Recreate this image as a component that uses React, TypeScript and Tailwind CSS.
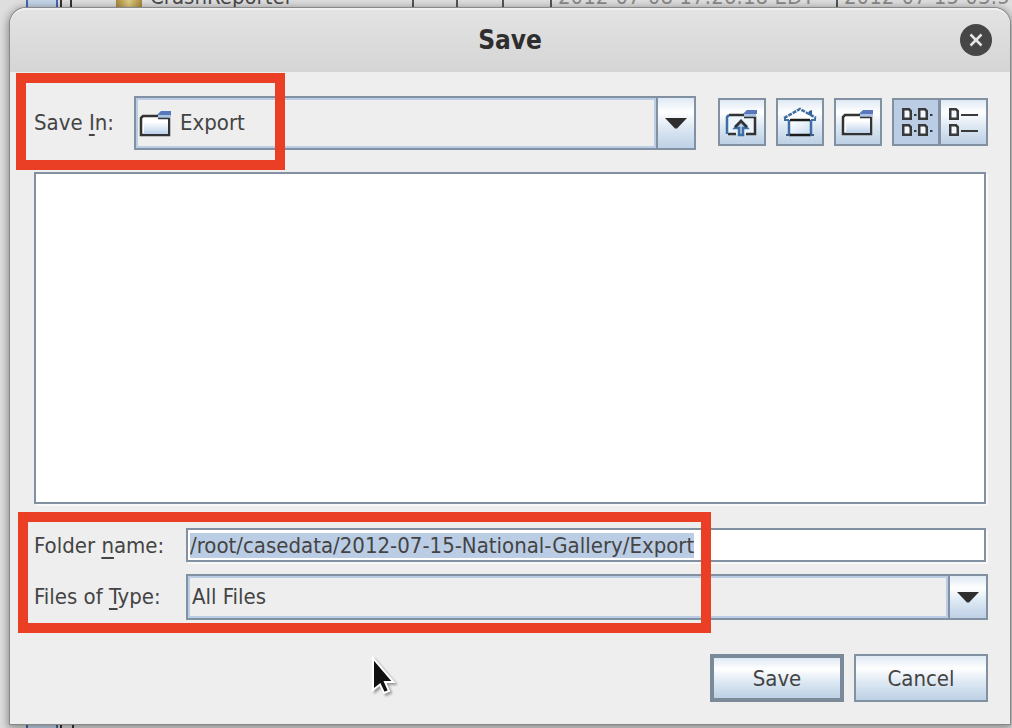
import { useEffect, useRef, type ReactNode } from "react";

const BUTTON_FACE =
  "bg-[linear-gradient(to_bottom,#dfe9f4_0%,#ffffff_28%,#dde8f3_60%,#bdd0e5_100%)]";

function ArrowCell() {
  return (
    <span
      aria-hidden="true"
      className={`pointer-events-none flex w-[38px] shrink-0 items-center justify-center self-stretch border-l-2 border-[#8191a1] ${BUTTON_FACE}`}
    >
      <svg width="22" height="12" viewBox="0 0 22 12">
        <path d="M0 1H22L12 11.500H10Z" fill="#2e2e2e" />
      </svg>
    </span>
  );
}

function Combo({ id, value, icon, size }: { id: string; value: string; icon?: ReactNode; size: string }) {
  return (
    <div className={`flex flex-1 items-center border-2 border-[#8191a1] ${size}`}>
      <div className="flex h-full flex-1 items-center border-2 border-[#bbcde4] bg-[#eeeeee]">
        {icon}
        <select
          id={id}
          className="h-full flex-1 cursor-default appearance-none bg-transparent pb-0.5 pl-0.5 outline-none"
          defaultValue={value}
        >
          <option>{value}</option>
        </select>
      </div>
      <ArrowCell />
    </div>
  );
}

function FolderShape() {
  return (
    <>
      <defs>
        <linearGradient id="folderFill" x1="0" y1="0" x2="0" y2="1">
          <stop offset="0.2" stopColor="#ffffff" />
          <stop offset="1" stopColor="#bcd1ea" />
        </linearGradient>
      </defs>
      <path d="M7 17L9 15H35V34H7Z" fill="#ffffff" stroke="#333" strokeWidth="2.500" />
      <path d="M10 18H34V33H10Z" fill="url(#folderFill)" />
      <path d="M24 17V13L27 10H36V17Z" fill="#a9c2e2" />
      <path d="M23 14L27 10H37V14Z" fill="#5977bd" />
      <path d="M24 17.500H35" stroke="#333" strokeWidth="1.500" />
    </>
  );
}

function FolderIcon() {
  return (
    <svg width="44" height="44" viewBox="0 0 44 44" aria-hidden="true">
      <FolderShape />
    </svg>
  );
}

function ComboFolderIcon() {
  return (
    <svg width="40" height="44" viewBox="4 0 40 44" aria-hidden="true" className="shrink-0">
      <FolderShape />
    </svg>
  );
}

function UpFolderIcon() {
  return (
    <svg width="44" height="44" viewBox="0 0 44 44" aria-hidden="true">
      <path d="M7 17L9 15H35V34H7Z" fill="#edf4fb" />
      <path d="M9 15H25M35 16V34H26M16 34H8" fill="none" stroke="#333" strokeWidth="2.500" />
      <path d="M9 15L7 17V34" fill="none" stroke="#3f6ea5" strokeWidth="2.500" />
      <path d="M24 17V13L27 10H36V17Z" fill="#a9c2e2" />
      <path d="M23 14L27 10H37V14Z" fill="#5977bd" />
      <path d="M24 17.500H35" stroke="#333" strokeWidth="1.500" />
      <path d="M19 35V28H15L21 21L27 28H23V35Z" fill="#b8d0ec" stroke="#3f6ea5" strokeWidth="2.500" />
      <path d="M15 27L21 21L27 27" fill="none" stroke="#333" strokeWidth="2.500" />
    </svg>
  );
}

function HomeIcon() {
  return (
    <svg width="44" height="44" viewBox="0 0 44 44" aria-hidden="true">
      <defs>
        <linearGradient id="wallFill" x1="0" y1="0" x2="1" y2="1">
          <stop offset="0.1" stopColor="#ffffff" />
          <stop offset="1" stopColor="#c8dbf0" />
        </linearGradient>
      </defs>
      <path d="M6 19L22 8L38 19Z" fill="#ffffff" />
      <path d="M11 20H33V34H11Z" fill="url(#wallFill)" />
      <path d="M30 14L31 11L34 10V17Z" fill="#2f5f9c" />
      <path d="M6 18L22 9L38 18" fill="none" stroke="#3f6ea5" strokeWidth="2.500" strokeDasharray="4 1" />
      <path d="M7 18V20H11M37 18V20H33" fill="none" stroke="#3f6ea5" strokeWidth="2" />
      <path d="M11 20V34M33 20V34" stroke="#3f6ea5" strokeWidth="2.500" />
      <path d="M12 20H32M11 35H33" stroke="#1c1c1c" strokeWidth="2.500" />
      <path d="M8 35H12M32 35H36" stroke="#3f5f88" strokeWidth="2" />
    </svg>
  );
}

function Tile({ x, y }: { x: number; y: number }) {
  return (
    <path
      transform={`translate(${x} ${y})`}
      d="M1.250 1.250H7L8.750 3V10.750H1.250Z"
      fill="#f2f8ff"
      stroke="#3a3a3a"
      strokeWidth="2.500"
    />
  );
}

function GridIcon() {
  return (
    <svg width="44" height="44" viewBox="0 0 44 44" aria-hidden="true">
      <Tile x={8} y={8} />
      <Tile x={24} y={8} />
      <Tile x={8} y={24} />
      <Tile x={24} y={24} />
      <path d="M20 15H22.500M36 15H38.500M20 31H22.500M36 31H38.500" stroke="#3a3a3a" strokeWidth="2" />
    </svg>
  );
}

function ListIcon() {
  return (
    <svg width="44" height="44" viewBox="0 0 44 44" aria-hidden="true">
      <Tile x={8} y={8} />
      <Tile x={8} y={24} />
      <path d="M20 15H37M20 31H37" stroke="#3a3a3a" strokeWidth="2" />
    </svg>
  );
}

function ToolButton({ label, children }: { label: string; children: ReactNode }) {
  return (
    <button type="button" aria-label={label} className={`size-12 shrink-0 border-2 border-[#8191a1] ${BUTTON_FACE}`}>
      {children}
    </button>
  );
}

function BackgroundRow() {
  return (
    <div className="flex h-2 items-end overflow-hidden whitespace-nowrap pl-[26px] leading-none text-[#8a8a8a]">
      <span className="h-2 w-8 shrink-0 border-x-2 border-[#4468b0] bg-[#c5d5e8]" />
      <span className="ml-0.5 h-2 w-3 shrink-0 border-x-2 border-[#333]" />
      <span className="ml-11 h-2 w-[26px] shrink-0 bg-[linear-gradient(to_right,#a98a3c,#e0cc83,#a98a3c)]" />
      <span className="w-[272px] shrink-0 border-r-2 border-[#555] pl-2 text-[#4a4a4a]">CrashReporter</span>
      <span className="h-2 w-11 shrink-0 border-r-2 border-[#555]" />
      <span className="h-2 w-[46px] shrink-0 border-r-2 border-[#555]" />
      <span className="h-2 w-12 shrink-0 border-r-2 border-[#555]" />
      <span className="w-[286px] shrink-0 border-r-2 border-[#555] pl-1.5">2012-07-08 17:26:18 EDT</span>
      <span className="pl-1.5">2012-07-15 03:54</span>
    </div>
  );
}

export default function App() {
  const nameRef = useRef<HTMLInputElement>(null);

  useEffect(() => {
    nameRef.current?.focus();
    nameRef.current?.select();
  }, []);

  return (
    <div className="flex min-h-screen flex-col overflow-hidden bg-[#dedede] font-['DejaVu_Sans_Condensed','DejaVu_Sans',sans-serif] text-[22px] text-[#444444]">
      <BackgroundRow />
      <main className="relative mr-0.5 ml-2.5 flex flex-1 flex-col rounded-t-2xl bg-[#eeeeee] shadow-[0_0_0_1px_#888888,0_2px_9px_2px_rgba(0,0,0,0.4)]">
        <header className="relative flex h-16 items-center justify-center rounded-t-2xl border-t-2 border-[#f0f0f0] bg-linear-to-b from-[#e3e3e3] to-[#d5d5d5] pb-0.5">
          <h1 className="text-[26px] font-bold text-[#2e2e2e]">Save</h1>
          <button type="button" aria-label="Close" className="absolute right-[18px] size-8 rounded-full bg-[#464646]">
            <svg width="32" height="32" viewBox="0 0 32 32" aria-hidden="true">
              <path d="M10.500 10.500L21.500 21.500M21.500 10.500L10.500 21.500" stroke="#e6e6e6" strokeWidth="2.500" />
            </svg>
          </button>
        </header>

        <form className="flex flex-1 flex-col pt-6 pr-[22px] pb-[22px] pl-6" onSubmit={(e) => e.preventDefault()}>
          <div className="relative flex items-center">
            <label htmlFor="save-in" className="w-[100px] shrink-0 pb-0.5">
              Save <u className="decoration-2 underline-offset-4">I</u>n:
            </label>
            <Combo id="save-in" value="Export" icon={<ComboFolderIcon />} size="h-[54px]" />
            <div className="ml-[22px] flex gap-2.5 pb-0.5">
              <ToolButton label="Up One Level"><UpFolderIcon /></ToolButton>
              <ToolButton label="Home"><HomeIcon /></ToolButton>
              <ToolButton label="Create New Folder"><FolderIcon /></ToolButton>
              <div className="flex">
                <button type="button" aria-label="List" aria-pressed="true" className="size-12 border-2 border-[#8191a1] bg-[#bbcde4]">
                  <GridIcon />
                </button>
                <button type="button" aria-label="Details" aria-pressed="false" className={`h-12 w-12 border-2 border-l border-[#8191a1] ${BUTTON_FACE}`}>
                  <ListIcon />
                </button>
              </div>
            </div>
            <div aria-hidden="true" className="pointer-events-none absolute -top-[23px] -left-[18px] h-[97px] w-[269px] border-10 border-[#ea3e25]" />
          </div>

          <div role="listbox" aria-label="Files" className="mt-[22px] mr-0.5 min-h-40 flex-1 border-2 border-[#8191a1] bg-white shadow-[2px_2px_0_#f8f8f8]" />

          <div className="relative mt-6 flex flex-col gap-3">
            <div className="flex items-center">
              <label htmlFor="folder-name" className="w-[152px] shrink-0">
                Folder <u className="decoration-2 underline-offset-4">n</u>ame:
              </label>
              <input
                id="folder-name"
                ref={nameRef}
                type="text"
                defaultValue="/root/casedata/2012-07-15-National-Gallery/Export"
                className="mr-0.5 h-[34px] min-w-0 flex-1 border-2 border-[#8191a1] bg-white px-0.5 leading-7 shadow-[2px_2px_0_#f8f8f8] outline-none selection:bg-[#bbcde4] selection:text-[#444444]"
              />
            </div>
            <div className="flex items-center">
              <label htmlFor="file-type" className="w-[152px] shrink-0 pb-0.5">
                Files of <u className="decoration-2 underline-offset-4">T</u>ype:
              </label>
              <Combo id="file-type" value="All Files" size="h-[46px]" />
            </div>
            <div aria-hidden="true" className="pointer-events-none absolute -top-4 -left-4 h-[121px] w-[693px] border-10 border-[#ea3e25]" />
          </div>

          <div className="mt-[34px] flex justify-end gap-2.5">
            <button type="submit" className={`h-12 w-[134px] border-4 border-[#7a8a99] ${BUTTON_FACE}`}>
              Save
            </button>
            <button type="button" className={`h-12 w-[134px] border-2 border-[#8191a1] ${BUTTON_FACE}`}>
              Cancel
            </button>
          </div>
        </form>

        <svg
          className="pointer-events-none absolute bottom-[26px] left-[360px] drop-shadow-[2px_2px_1px_rgba(0,0,0,0.35)]"
          width="28"
          height="42"
          viewBox="0 0 28 42"
          aria-hidden="true"
        >
          <path d="M3 2V34L10 28.500L14 37L19 35L15 26H23.500Z" fill="#111" stroke="#fff" strokeWidth="2" />
        </svg>
      </main>
      <div className="flex h-1 pl-[26px]">
        <span className="w-8 border-x-2 border-[#4468b0] bg-[#c5d5e8]" />
        <span className="ml-0.5 w-3.5 border-x-2 border-[#333]" />
      </div>
    </div>
  );
}
